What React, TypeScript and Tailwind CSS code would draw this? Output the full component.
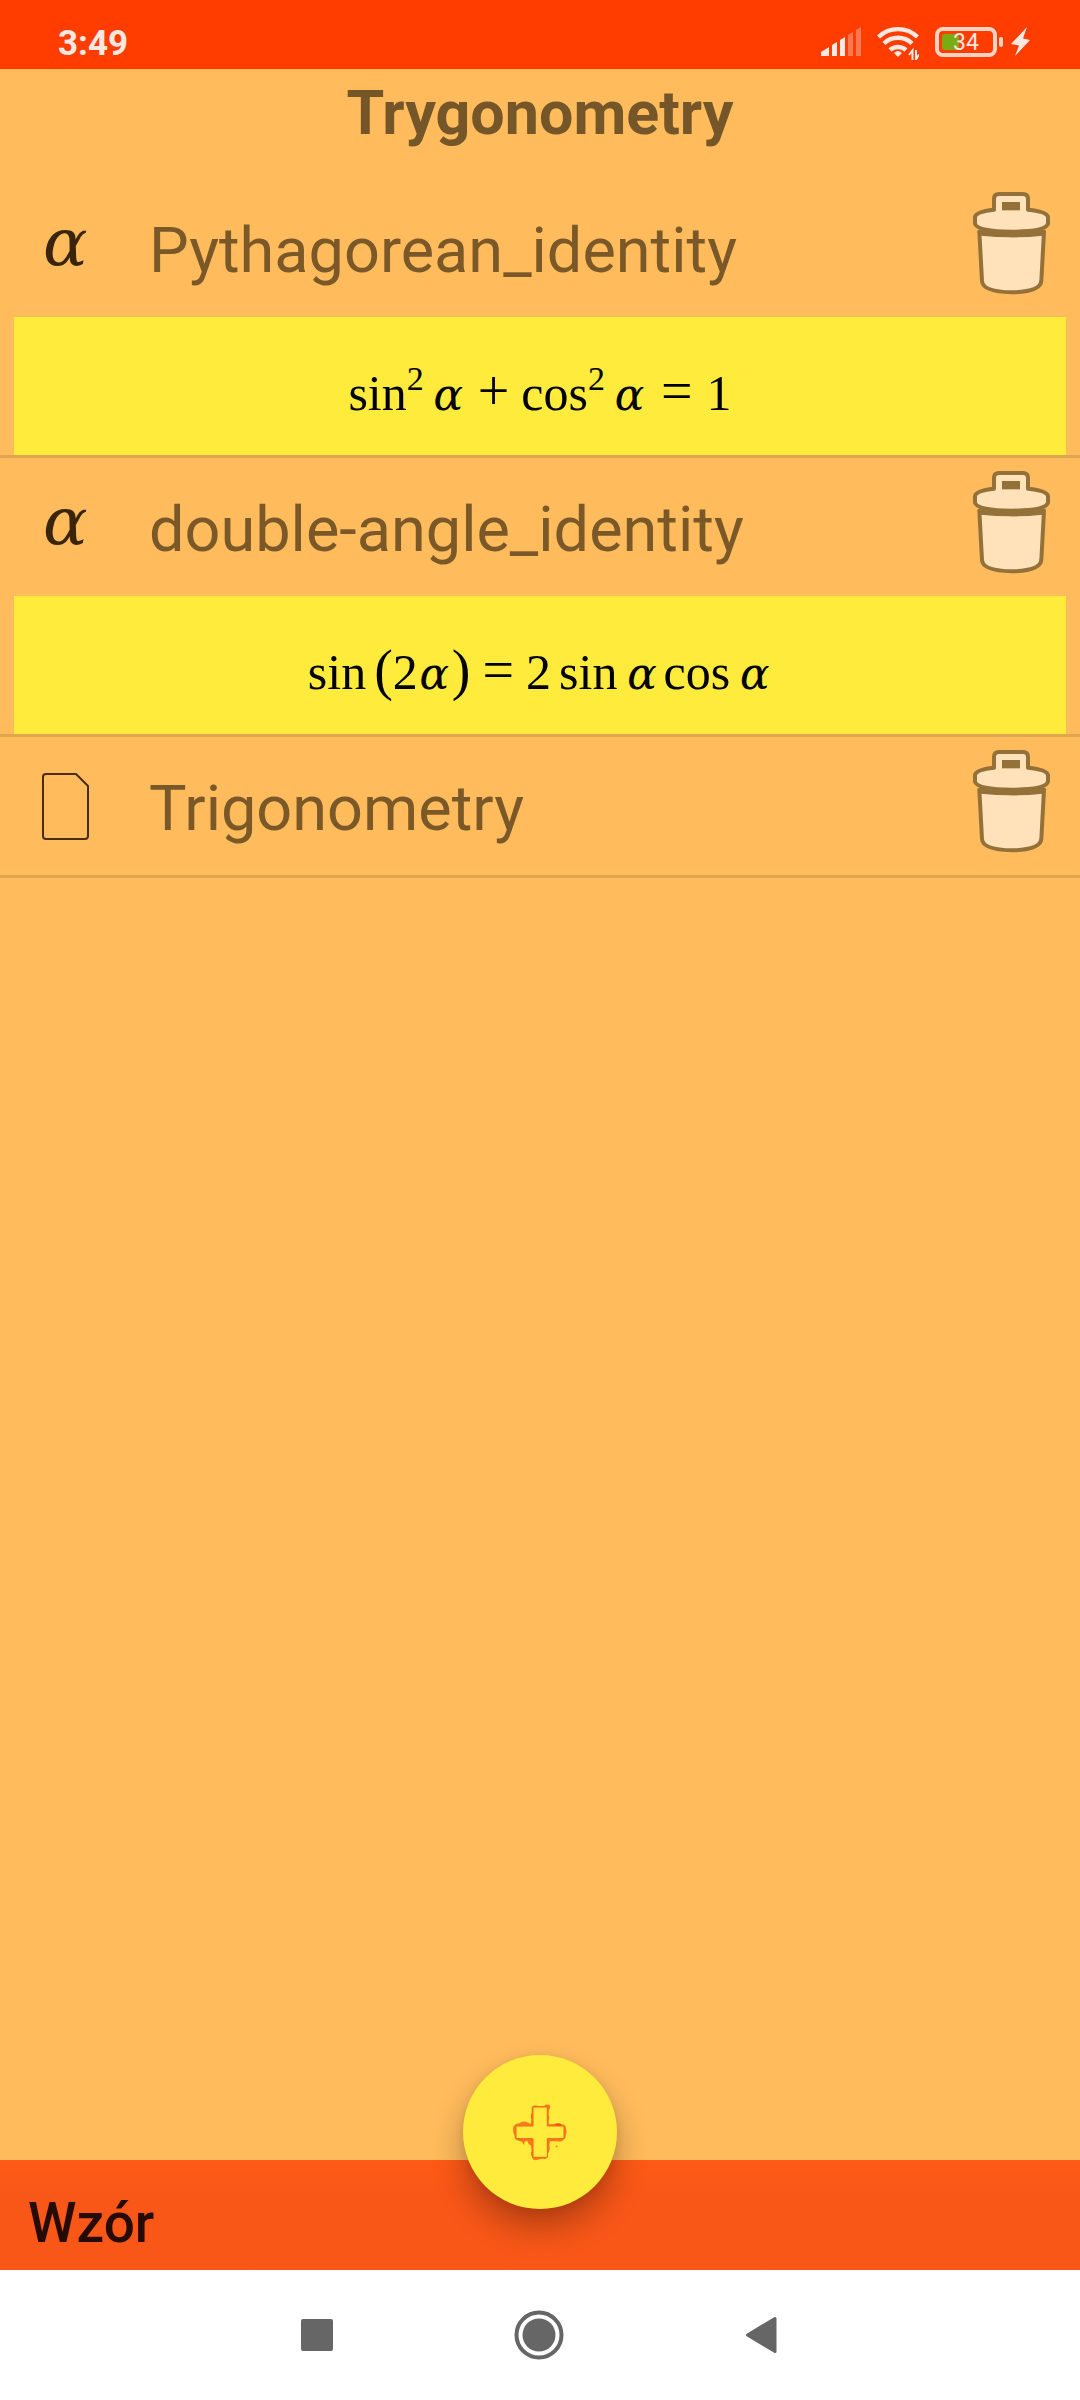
import { ReactNode } from "react";

function StatusBar() {
  return (
    <header className="flex h-[69px] items-start justify-between bg-[#ff3d00] pl-[58px] pr-[50px] pt-[26px] text-[#ffe8e0]">
      <time className="text-[35px] leading-[36px] font-bold">3:49</time>
      <div className="flex items-start">
        <svg className="h-[34px] w-[40px]" viewBox="0 0 40 34" fill="#ffe8e0" aria-label="Signal">
          <path d="M0 30v-4l8-5v9zM11 30V19l5-3v14zM19 30V14l5-3v19z" />
          <path d="M27 30V9l5-3v24zM35 30V4l5-3v29z" opacity=".35" />
        </svg>
        <svg className="ml-4 h-[34px] w-[42px]" viewBox="0 0 42 34" fill="none" stroke="#ffe8e0" strokeWidth="4.4" aria-label="Wi-Fi">
          <path d="M1.500 11a28 28 0 0 1 39 0M7 17.500a20 20 0 0 1 28 0M13 24a12 12 0 0 1 16 0" />
          <path d="M17 27q4-4 8 0l-4 4z" fill="#ffe8e0" stroke="none" />
          <path d="M35.500 34V24.500l-3.500 4.500M39 24v9.500l3-5" strokeWidth="2" />
        </svg>
        <div className="relative ml-4 h-[34px] w-[69px]">
          <svg className="h-[34px] w-[69px]" viewBox="0 0 69 34" aria-hidden="true">
            <rect x="7" y="8" width="17" height="16" rx="3" fill="#7aab12" />
            <rect x="2" y="3" width="58" height="26" rx="6" fill="none" stroke="#ffd3c4" strokeWidth="4" />
            <rect x="64" y="11" width="4" height="10" rx="2" fill="#ffd3c4" />
          </svg>
          <span className="absolute inset-y-0 left-0 w-[62px] text-center text-[23px] leading-[34px]">34</span>
        </div>
        <svg className="ml-[7px] h-[34px] w-[19px]" viewBox="0 0 19 34" fill="#ffe8e0" aria-label="Charging">
          <path d="M16 1 0 18l8 1.500L4 30 19 14l-7-1.500z" />
        </svg>
      </div>
    </header>
  );
}

function TrashIcon() {
  return (
    <svg className="h-[105px] w-[79px]" viewBox="97 62 237 315" fill="#ffe2ba" stroke="#95713a" strokeWidth="12" strokeLinejoin="round" aria-hidden="true">
      <path d="M119 184 127 332Q129 364 216 366Q302 364 305 332L313 184Q216 206 119 184Z" />
      <path d="M120 184Q216 204 312 184L308 190Q216 200 124 190Z" />
      <path d="M163 118V86Q163 71 178 71H250Q265 71 265 86V118Q322 124 325 140V160Q318 184 216 184Q112 182 106 160V140Q109 124 163 118Z" />
      <path d="M187 95H241V120H187Z" fill="#95713a" stroke="none" />
    </svg>
  );
}

function AlphaIcon() {
  return <span className="pb-1 pl-[2px] font-['DejaVu_Math_TeX_Gyre','Liberation_Serif',serif] text-[66px] leading-[80px] text-[#3a250c]">𝛼</span>;
}

function PageIcon() {
  return (
    <svg className="h-[67px] w-[48px]" viewBox="0 0 48 67" fill="none" stroke="#4a2d10" strokeWidth="2" strokeLinejoin="round" aria-hidden="true">
      <path d="M5 1H35L47 13V63Q47 66 44 66H5Q2 66 2 63V4Q2 1 5 1Z" />
    </svg>
  );
}

function Entry({ name, icon, children }: { name: string; icon: ReactNode; children?: ReactNode }) {
  return (
    <li className="border-b-[3px] border-[#dfa750]">
      <div className="flex h-[138px] items-center pr-[29px]">
        <span className="flex w-[130px] shrink-0 items-center justify-center">{icon}</span>
        <h2 className="min-w-0 flex-1 pl-[19px] pt-[6px] text-[63px] leading-[74px] text-[#7a5827]">{name}</h2>
        <button type="button" aria-label={`Delete ${name}`} className="mb-[10px]">
          <TrashIcon />
        </button>
      </div>
      {children && (
        <div className="mx-[14px] flex h-[138px] items-center justify-center bg-[#ffeb3b] pt-3 font-['Liberation_Serif',serif] text-[50px] leading-[60px] whitespace-nowrap text-black">
          {children}
        </div>
      )}
    </li>
  );
}

function Alpha() {
  return <span className="font-['DejaVu_Math_TeX_Gyre','Liberation_Serif',serif] text-[44px] leading-none">𝛼</span>;
}

function Squared() {
  return <sup className="-top-5 text-[34px] leading-none">2</sup>;
}

export default function App() {
  return (
    <div className="flex min-h-screen flex-col bg-[#ffbb5c] font-['Roboto',sans-serif]">
      <StatusBar />
      <main className="flex-1">
        <h1 className="h-[110px] pt-[7px] text-center text-[61px] leading-[74px] font-bold text-[#755628]">Trygonometry</h1>
        <ul>
          <Entry name="Pythagorean_identity" icon={<AlphaIcon />}>
            <div className="flex items-baseline">
              <span>sin<Squared /></span>
              <span className="ml-2"><Alpha /></span>
              <span className="mx-3 text-[56px]">+</span>
              <span>cos<Squared /></span>
              <span className="ml-2"><Alpha /></span>
              <span className="mx-[14px] text-[56px]">=</span>
              <span>1</span>
            </div>
          </Entry>
          <Entry name="double-angle_identity" icon={<AlphaIcon />}>
            <div className="flex items-baseline">
              <span>sin</span>
              <span className="ml-2 text-[56px]">(</span>
              <span>2<Alpha /></span>
              <span className="text-[56px]">)</span>
              <span className="mx-3 text-[56px]">=</span>
              <span>2</span>
              <span className="ml-2">sin</span>
              <span className="ml-2"><Alpha /></span>
              <span className="ml-1">cos</span>
              <span className="ml-2"><Alpha /></span>
            </div>
          </Entry>
          <Entry name="Trigonometry" icon={<PageIcon />} />
        </ul>
      </main>
      <footer>
        <div className="relative flex h-[110px] items-center bg-linear-to-b from-[#ff5a16] to-[#f85718] to-30% px-7 pt-4">
          <span className="text-[55px] leading-[64px] font-medium text-[#260b00]">Wzór</span>
          <button
            type="button"
            aria-label="Add formula"
            className="absolute -top-[105px] left-1/2 flex size-[154px] -translate-x-1/2 items-center justify-center rounded-full bg-[#ffeb3b] shadow-[0_18px_32px_rgba(0,0,0,0.28),0_2px_10px_rgba(0,0,0,0.08)]"
          >
            <svg className="h-[57px] w-[56px]" viewBox="36 41 168 171" aria-hidden="true">
              <path
                fill="#fa7a1a"
                d="M95 50Q104 42 113 47L132 47Q139 40 149 44Q153 50 147 58L146 72Q150 82 146 92L147 102L163 101Q176 94 184 102Q196 101 198 114Q202 124 197 136Q198 145 190 149Q182 157 172 153L150 153L148 166Q152 178 144 190Q146 202 137 206Q122 203 108 210Q98 210 96 201Q90 190 95 181L93 166Q84 162 82 151L74 154L72 165L67 155L52 150Q42 147 44 137Q37 124 40 110Q45 100 58 99Q68 91 80 95L92 101L94 88Q90 76 95 67ZM166 167q5-4 7 2q-3 5-7-2z"
              />
              <path d="M48 107H99V145H85Q64 147 48 147ZM142 107H166V101H184V107Z" fill="#f45212" />
              <path d="M99 50H142V107H192V145H142V201H99V145H48V107H99Z" fill="#ffeb3b" stroke="#f9651a" strokeWidth="3" />
            </svg>
          </button>
        </div>
        <nav className="flex h-[130px] items-center justify-center gap-[112px] bg-white pr-[2px]" aria-label="System navigation">
          <button type="button" aria-label="Recent apps" className="flex w-[110px] justify-center">
            <span className="size-8 rounded-[2px] bg-[#666666]" />
          </button>
          <button type="button" aria-label="Home" className="flex w-[110px] justify-center">
            <svg className="size-[50px]" viewBox="0 0 50 50" aria-hidden="true">
              <circle cx="25" cy="25" r="22.500" fill="none" stroke="#666" strokeWidth="4" />
              <circle cx="25" cy="25" r="16.500" fill="#666" />
            </svg>
          </button>
          <button type="button" aria-label="Back" className="flex w-[110px] justify-center">
            <svg className="h-[38px] w-8" viewBox="0 0 32 38" fill="#666" stroke="#666" strokeWidth="3" strokeLinejoin="round" aria-hidden="true">
              <path d="M30 2.500V35.500L2.500 19Z" />
            </svg>
          </button>
        </nav>
      </footer>
    </div>
  );
}
